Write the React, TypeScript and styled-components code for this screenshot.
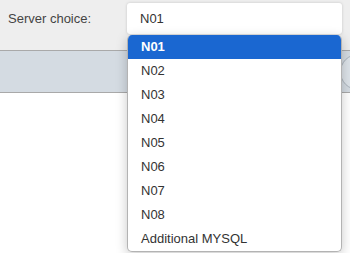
import React from 'react';
import styled, { createGlobalStyle } from 'styled-components';

const GlobalStyle = createGlobalStyle`
  html, body {
    margin: 0;
    padding: 0;
    background: #ffffff;
    font-family: "Liberation Sans", Arial, sans-serif;
    font-size: 13px;
    color: #333333;
  }
`;

const Page = styled.div`
  width: 350px;
  height: 253px;
  position: relative;
  overflow: hidden;
  background: #ffffff;
`;

const Header = styled.div`
  display: flex;
  align-items: flex-start;
  height: 51px;
  padding: 3px 8px 0 8px;
  box-sizing: border-box;
  background: #eeeeee;
  border-bottom: 1px solid #a9a9a9;
`;

const Label = styled.div`
  width: 119px;
  line-height: 31px;
  color: #444444;
`;

const SelectWrap = styled.div`
  position: relative;
  flex: 1;
`;

const SelectBox = styled.div`
  height: 31px;
  line-height: 31px;
  padding-left: 13px;
  background: #ffffff;
  border-radius: 3px;
  box-shadow: 0 0 3px rgba(0, 0, 0, 0.18);
`;

const Menu = styled.ul`
  position: absolute;
  top: 32px;
  left: 0;
  right: 0;
  margin: 0;
  padding: 0;
  list-style: none;
  background: #ffffff;
  border: 1px solid #b3b3b3;
  border-top: 0;
  border-radius: 5px;
  box-shadow: 0 3px 12px rgba(0, 0, 0, 0.22);
  overflow: hidden;
  z-index: 10;
`;

const Option = styled.li<{ $active?: boolean }>`
  height: 24px;
  line-height: 24px;
  padding-left: 13px;
  background: ${(p) => (p.$active ? '#1a67d1' : 'transparent')};
  color: ${(p) => (p.$active ? '#ffffff' : '#333333')};
  font-weight: ${(p) => (p.$active ? 'bold' : 'normal')};
`;

const Toolbar = styled.div`
  display: flex;
  align-items: center;
  justify-content: flex-end;
  height: 41px;
  background: #d4dbe2;
  border-bottom: 1px solid #a9a9a9;
`;

const RoundButton = styled.div`
  width: 34px;
  height: 34px;
  margin-right: -26px;
  border-radius: 50%;
  border: 1px solid #aab3bc;
  background: #dde3e9;
`;

const options = ['N01', 'N02', 'N03', 'N04', 'N05', 'N06', 'N07', 'N08', 'Additional MYSQL'];

export default function App() {
  return (
    <Page>
      <GlobalStyle />
      <Header>
        <Label>Server choice:</Label>
        <SelectWrap>
          <SelectBox>N01</SelectBox>
          <Menu>
            {options.map((o, i) => (
              <Option key={o} $active={i === 0}>
                {o}
              </Option>
            ))}
          </Menu>
        </SelectWrap>
      </Header>
      <Toolbar>
        <RoundButton />
      </Toolbar>
    </Page>
  );
}
